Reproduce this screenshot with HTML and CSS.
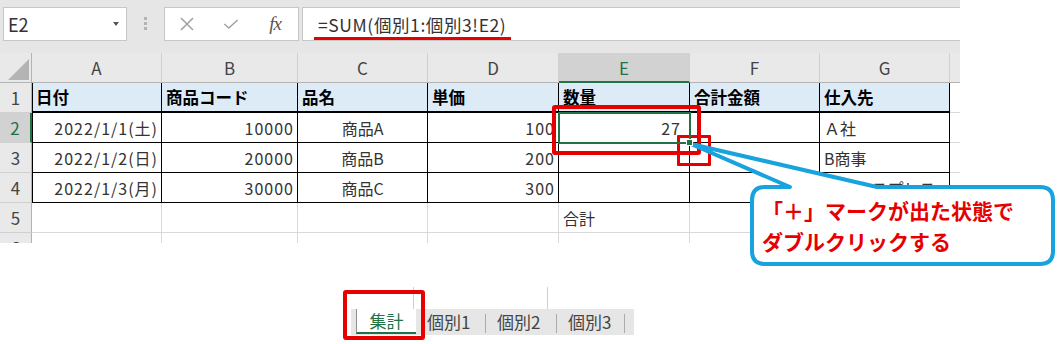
FILE: index.html
```html
<!DOCTYPE html>
<html lang="ja">
<head>
<meta charset="utf-8">
<title>Excel</title>
<link rel="stylesheet" href="styles.css">
</head>
<body>
<div class="excel">
  <div class="fbar">
    <div class="namebox"><span>E2</span><i class="caret"></i></div>
    <div class="dots"><i></i><i></i><i></i></div>
    <div class="btnbox">
      <span class="ico"><svg width="16" height="14" viewBox="0 0 16 14"><path d="M2 1 L14 13 M14 1 L2 13" stroke="#a3a3a3" stroke-width="1.6" fill="none"/></svg></span>
      <span class="ico"><svg width="18" height="12" viewBox="0 0 18 12"><path d="M1.5 6 L6.5 10.5 L16.5 1.5" stroke="#a3a3a3" stroke-width="1.8" fill="none"/></svg></span>
      <span class="ico fx">fx</span>
    </div>
    <div class="formula">=SUM(個別1:個別3!E2)</div>
  </div>

  <div class="sheet">
    <div class="cell corner"><i class="tri"></i></div>
    <div class="cell ch">A</div>
    <div class="cell ch">B</div>
    <div class="cell ch">C</div>
    <div class="cell ch">D</div>
    <div class="cell ch sel-h">E</div>
    <div class="cell ch">F</div>
    <div class="cell ch">G</div>
    <div class="cell ch xc"></div>

    <div class="cell rh">1</div>
    <div class="cell hd first">日付</div>
    <div class="cell hd">商品コード</div>
    <div class="cell hd">品名</div>
    <div class="cell hd">単価</div>
    <div class="cell hd">数量</div>
    <div class="cell hd">合計金額</div>
    <div class="cell hd">仕入先</div>
    <div class="cell xc"></div>

    <div class="cell rh sel-r">2</div>
    <div class="cell td first r num">2022/1/1(土)</div>
    <div class="cell td r num">10000</div>
    <div class="cell td c">商品A</div>
    <div class="cell td r num">100</div>
    <div class="cell td r num sel">27</div>
    <div class="cell td"></div>
    <div class="cell td">Ａ社</div>
    <div class="cell xc"></div>

    <div class="cell rh">3</div>
    <div class="cell td first r num">2022/1/2(日)</div>
    <div class="cell td r num">20000</div>
    <div class="cell td c">商品B</div>
    <div class="cell td r num">200</div>
    <div class="cell td"></div>
    <div class="cell td"></div>
    <div class="cell td">B商事</div>
    <div class="cell xc"></div>

    <div class="cell rh">4</div>
    <div class="cell td first r num">2022/1/3(月)</div>
    <div class="cell td r num">30000</div>
    <div class="cell td c">商品C</div>
    <div class="cell td r num">300</div>
    <div class="cell td"></div>
    <div class="cell td"></div>
    <div class="cell td">Ｃエクスプレス</div>
    <div class="cell xc"></div>

    <div class="cell rh">5</div>
    <div class="cell"></div>
    <div class="cell"></div>
    <div class="cell"></div>
    <div class="cell"></div>
    <div class="cell">合計</div>
    <div class="cell"></div>
    <div class="cell"></div>
    <div class="cell xc"></div>

    <div class="cell rh last"><span class="peek">6</span></div>
    <div class="cell last"></div>
    <div class="cell last"></div>
    <div class="cell last"></div>
    <div class="cell last"></div>
    <div class="cell last"></div>
    <div class="cell last"></div>
    <div class="cell last"></div>
    <div class="cell last xc"></div>
  </div>
</div>

<div class="gap"></div>
<div class="ghost"><i></i><i></i></div>
<div class="tabbar">
  <div class="tab active">集計</div>
  <div class="tab w70"><span>個別1</span><i class="sep"></i></div>
  <div class="tab w71"><span>個別2</span><i class="sep"></i></div>
  <div class="tab w68"><span>個別3</span><i class="sep"></i></div>
</div>

<div class="uline"></div>
<div class="mark mark-e2"></div>
<div class="mark mark-handle"></div>
<div class="mark mark-tab"></div>

<div class="callout">
  <svg class="bubble" width="305" height="81" viewBox="0 0 305 81">
    <path d="M 15 2 L 40 2 L -59 -41 L 127 2 L 290 2 Q 303 2 303 15 L 303 66 Q 303 79 290 79 L 15 79 Q 2 79 2 66 L 2 15 Q 2 2 15 2 Z" fill="#fff" stroke="#18a3de" stroke-width="4" stroke-linejoin="round"/>
  </svg>
  <div class="callout-text">「＋」マークが出た状態で<br>ダブルクリックする</div>
</div>
</body>
</html>
```

FILE: styles.css
```css
html, body {
  margin: 0;
  padding: 0;
}
body {
  width: 1057px;
  height: 344px;
  overflow: hidden;
  background: #fff;
  position: relative;
  font-family: "Noto Sans CJK JP", "Noto Sans", sans-serif;
}

.excel {
  width: 960px;
}

/* formula bar */
.fbar {
  height: 53px;
  background: #e6e6e6;
  display: flex;
  align-items: flex-start;
  padding: 7px 0 0 3px;
  box-sizing: border-box;
}
.namebox {
  width: 124px;
  height: 34px;
  background: #fff;
  border: 1px solid #c6c6c6;
  box-sizing: border-box;
  display: flex;
  align-items: center;
  justify-content: space-between;
  padding: 0 7px 0 4px;
  font-size: 18px;
  color: #333;
}
.caret {
  width: 0;
  height: 0;
  border-left: 3.5px solid transparent;
  border-right: 3.5px solid transparent;
  border-top: 4px solid #555;
}
.dots {
  width: 37px;
  display: flex;
  flex-direction: column;
  align-items: center;
  gap: 2px;
  padding-top: 10px;
}
.dots i {
  width: 3px;
  height: 3px;
  background: #b3b3b3;
}
.btnbox {
  width: 135px;
  height: 34px;
  background: #fff;
  border: 1px solid #c6c6c6;
  box-sizing: border-box;
  display: flex;
  align-items: center;
  padding-left: 14px;
  gap: 28px;
}
.ico {
  width: 16px;
  display: flex;
  justify-content: center;
  align-items: center;
}
.fx {
  font-family: "Liberation Serif", serif;
  font-style: italic;
  font-size: 19px;
  color: #555;
  letter-spacing: -1px;
}
.formula {
  margin-left: 3px;
  flex: 1;
  height: 34px;
  background: #fff;
  border: 1px solid #c6c6c6;
  border-right: none;
  box-sizing: border-box;
  display: flex;
  align-items: center;
  padding-left: 15px;
  font-size: 17.5px;
  letter-spacing: 0.6px;
  color: #333;
}

/* sheet grid */
.sheet {
  display: grid;
  grid-template-columns: 32px 130px 136px 130px 131px 131px 130px 130px 10px;
  grid-template-rows: 30px 30px 30px 30px 30px 30px 10px;
}
.cell {
  box-sizing: border-box;
  border-right: 1px solid #d9d9d9;
  border-bottom: 1px solid #d9d9d9;
  display: flex;
  align-items: center;
  padding: 0 4px;
  font-size: 16px;
  color: #333;
  white-space: nowrap;
  overflow: hidden;
}
.num {
  letter-spacing: 1px;
  padding-right: 3px;
}
.ch {
  background: #e9e9e9;
  justify-content: center;
  color: #444;
  font-size: 17px;
  border-right-color: #d0d0d0;
  border-bottom-color: #b3b3b3;
}
.rh {
  background: #e9e9e9;
  justify-content: center;
  color: #444;
  font-size: 17px;
  padding: 0;
  border-right-color: #b3b3b3;
  border-bottom-color: #d0d0d0;
}
.corner {
  background: #e9e9e9;
  border-right-color: #b3b3b3;
  border-bottom-color: #b3b3b3;
  justify-content: flex-end;
  align-items: flex-end;
  padding: 0 2px 2px 0;
}
.tri {
  width: 21px;
  height: 21px;
  background: #b4b4b4;
  clip-path: polygon(100% 0, 100% 100%, 0 100%);
}
.hd {
  background: #ddebf7;
  font-weight: 700;
  color: #000;
  font-size: 16.5px;
  border-right-color: #000;
  border-bottom: 2px solid #000;
}
.td {
  border-right-color: #000;
  border-bottom-color: #000;
}
.first {
  box-shadow: inset 1px 0 0 #000;
}
.r {
  justify-content: flex-end;
}
.c {
  justify-content: center;
}
.xc {
  border-right: none;
}
.ch.xc {
  border-right: none;
}
.sel-h {
  background: #d2d2d2;
  color: #217346;
  border-bottom: 2px solid #217346;
}
.sel-r {
  background: #d2d2d2;
  color: #217346;
  border-right: 2px solid #217346;
}
.sel {
  position: relative;
  overflow: visible;
  outline: 2px solid #217346;
  outline-offset: -1px;
  z-index: 1;
  padding-right: 8px;
}
.sel::after {
  content: "";
  position: absolute;
  right: -4px;
  bottom: -4px;
  width: 5px;
  height: 5px;
  background: #217346;
  border: 1px solid #fff;
}
.last {
  border-bottom: none;
  align-items: flex-start;
}
.peek {
  display: block;
  height: 30px;
  line-height: 30px;
  flex: none;
}

/* sheet tabs */
.gap {
  height: 44px;
}
.ghost {
  display: flex;
  height: 22px;
  padding-left: 413px;
}
.ghost i {
  width: 133px;
  border-left: 1px solid #cfcfcf;
}
.tabbar {
  margin-left: 351px;
  width: 283px;
  height: 26px;
  background: #e6e6e6;
  display: flex;
  align-items: flex-start;
  padding-left: 5px;
  box-sizing: border-box;
}
.tab {
  height: 24px;
  box-sizing: border-box;
  display: flex;
  align-items: center;
  justify-content: space-between;
  padding-left: 11px;
  font-size: 17px;
  color: #444;
}
.tab.active {
  width: 60px;
  height: 25px;
  padding: 0;
  justify-content: center;
  background: #fff;
  color: #217346;
  border-left: 1px solid #8f8f8f;
  border-bottom: 2px solid #217346;
}
.w70 { width: 70px; }
.w71 { width: 71px; }
.w68 { width: 68px; }
.sep {
  width: 1px;
  height: 19px;
  background: #ababab;
  margin-top: 4px;
}

/* annotations */
.uline {
  position: absolute;
  left: 314px;
  top: 37px;
  width: 197px;
  height: 3px;
  background: #e60000;
}
.mark {
  position: absolute;
  border: 4px solid #e60000;
  box-sizing: border-box;
  border-radius: 3px;
}
.mark-e2 {
  left: 552px;
  top: 105px;
  width: 149px;
  height: 50px;
}
.mark-handle {
  left: 677px;
  top: 135px;
  width: 34px;
  height: 31px;
  border-width: 3px;
  border-radius: 1px;
}
.mark-tab {
  left: 343px;
  top: 290px;
  width: 82px;
  height: 50px;
}
.callout {
  position: absolute;
  left: 750px;
  top: 185px;
  width: 305px;
  height: 81px;
}
.bubble {
  position: absolute;
  left: 0;
  top: 0;
  overflow: visible;
}
.callout-text {
  position: relative;
  padding: 10px 0 0 12px;
  font-weight: 700;
  color: #e60000;
  font-size: 21px;
  line-height: 31px;
  white-space: nowrap;
}
```
